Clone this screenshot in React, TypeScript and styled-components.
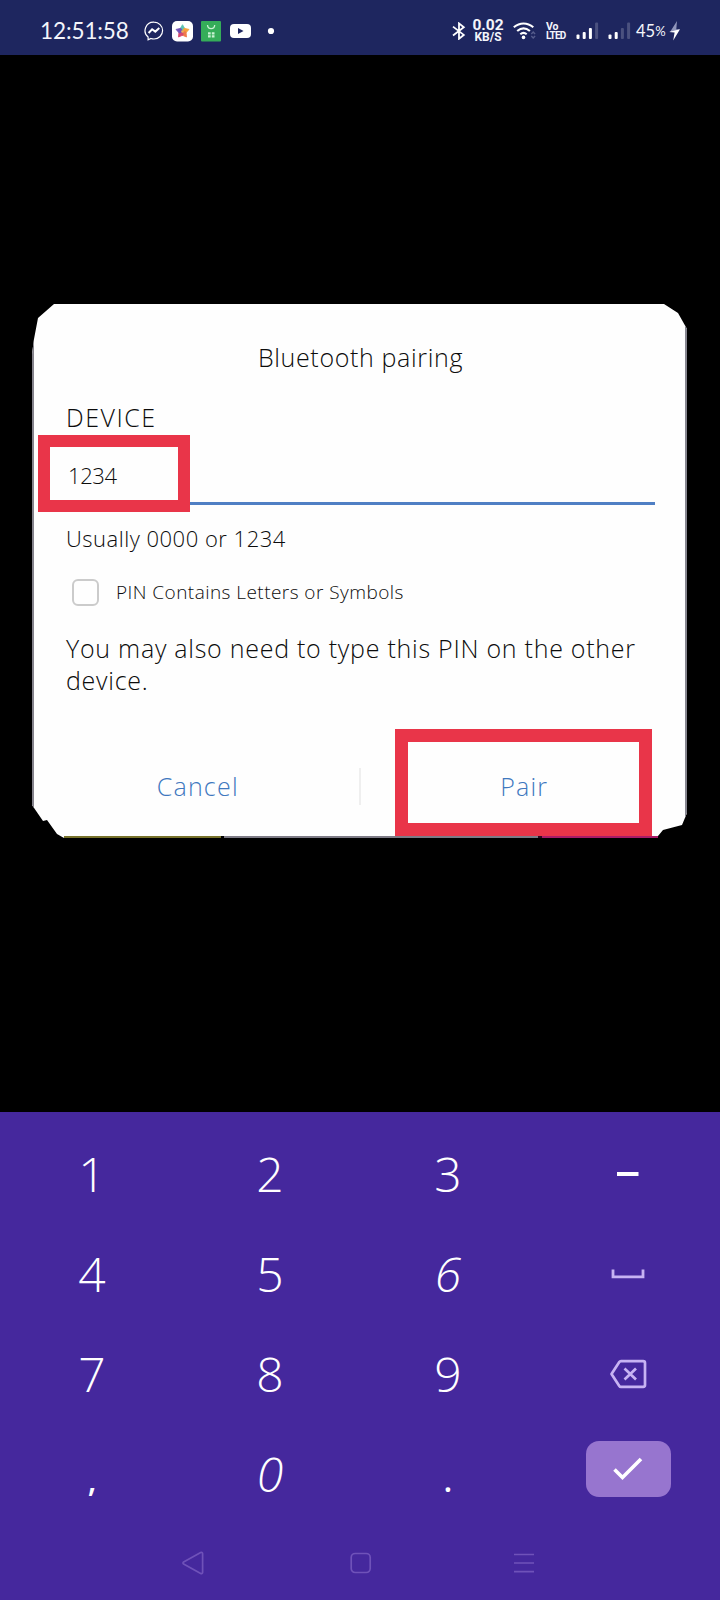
import React from 'react';
import styled, { createGlobalStyle } from 'styled-components';

const GlobalStyle = createGlobalStyle`
  * { box-sizing: border-box; }
  body { margin: 0; background: #000; }
  button { border: 0; padding: 0; background: none; font: inherit; color: inherit; }
`;

const Screen = styled.div`
  width: 720px;
  height: 1600px;
  display: flex;
  flex-direction: column;
  background: #000;
  font-family: 'Open Sans', 'Noto Sans', sans-serif;
  font-weight: 300;
  overflow: hidden;
`;

/* ---------- status bar ---------- */

const StatusBar = styled.header`
  flex: none;
  display: flex;
  justify-content: space-between;
  align-items: center;
  height: 55px;
  padding: 7px 39px 0 40px;
  background: #1e265f;
  color: #f4f5fb;
`;

const StatusGroup = styled.div`
  display: flex;
  align-items: center;
  height: 30px;
`;

const Clock = styled.span`
  width: 104px;
  font: 400 22.5px/30px Lato, sans-serif;
  letter-spacing: -0.1px;
`;

const StatusIcon = styled.svg<{ $gap?: number }>`
  flex: none;
  display: block;
  margin-left: ${(p) => p.$gap ?? 0}px;
`;

const StackedLabel = styled.div<{ $gap: number; $width: number }>`
  display: flex;
  flex-direction: column;
  align-items: center;
  width: ${(p) => p.$width}px;
  margin-left: ${(p) => p.$gap}px;
  font-family: Roboto, sans-serif;
  font-weight: 700;
  white-space: nowrap;
`;

const StackedLine = styled.span<{ $size: number; $height: number; $left?: boolean; $tight?: number }>`
  font-size: ${(p) => p.$size}px;
  line-height: ${(p) => p.$height}px;
  letter-spacing: ${(p) => p.$tight ?? 0}px;
  align-self: ${(p) => (p.$left ? 'flex-start' : 'center')};
`;

const Battery = styled.span`
  width: 30px;
  margin-left: 5px;
  font: 400 16.5px/30px Lato, sans-serif;
  white-space: nowrap;
`;

const Percent = styled.span`
  font-size: 13px;
  vertical-align: 1px;
`;

/* ---------- pairing dialog ---------- */

const Backdrop = styled.main`
  flex: none;
  height: 1057px;
  padding: 249px 0 0 32px;
`;

const Dialog = styled.section`
  position: relative;
  display: flex;
  flex-direction: column;
  width: 655px;
  height: 534px;
  background: #fefefe;
  border-left: 2px solid #85838c;
  border-right: 2px solid #85858f;
  clip-path: polygon(
    22px 0, 632px 0, 646px 9px, 655px 25px, 655px 509px, 650px 521px, 631px 526px, 626px 532px,
    626px 534px, 32px 534px, 25px 530px, 15px 516px, 11px 517px, 0 501px, 0 50px, 2px 35px, 6px 14px
  );
`;

const DialogBody = styled.div`
  display: flex;
  flex-direction: column;
  height: 464px;
  padding: 37px 30px 0 32px;
  color: #0c0c0c;
`;

const DialogTitle = styled.h1`
  margin: 0;
  font-size: 25px;
  font-weight: 300;
  line-height: 32px;
  letter-spacing: 0.65px;
  text-align: center;
`;

const DeviceName = styled.div`
  margin-top: 28px;
  font-size: 25px;
  line-height: 32px;
  letter-spacing: 1.5px;
`;

const PinField = styled.div`
  height: 72px;
  padding: 26px 0 0 2px;
  border-bottom: 3px solid #4f7fc4;
  font-size: 22px;
  line-height: 32px;
  letter-spacing: -0.4px;
`;

const Hint = styled.p`
  margin: 17px 0 0;
  font-size: 22px;
  line-height: 32px;
  letter-spacing: 0.5px;
`;

const CheckRow = styled.label`
  display: flex;
  gap: 17px;
  margin: 25px 0 0 6px;
  font-size: 19px;
  line-height: 26px;
  letter-spacing: 0.45px;
`;

const CheckBox = styled.span`
  width: 27px;
  height: 27px;
  border: 2px solid #cbcbcb;
  border-radius: 6px;
`;

const Message = styled.p`
  margin: 26px 0 0;
  font-size: 25px;
  line-height: 32px;
  letter-spacing: 0.74px;
  white-space: nowrap;
`;

const Actions = styled.div`
  display: flex;
  height: 37px;
`;

const Action = styled.button`
  flex: 1;
  padding-left: 3px;
  color: #3f78be;
  font-size: 25px;
  line-height: 37px;
  letter-spacing: 1.2px;

  & + & {
    border-left: 2px solid #efefef;
  }
`;

const Highlight = styled.div<{ $x: number; $y: number; $w: number; $h: number; $stroke: number }>`
  position: absolute;
  left: ${(p) => p.$x}px;
  top: ${(p) => p.$y}px;
  width: ${(p) => p.$w}px;
  height: ${(p) => p.$h}px;
  border: ${(p) => p.$stroke}px solid #e93549;
`;

const BottomEdge = styled.div`
  display: flex;
  height: 2px;
  margin-top: auto;
  padding-left: 30px;
`;

const EdgePiece = styled.span<{ $w: number; $color: string }>`
  width: ${(p) => p.$w}px;
  background: ${(p) => p.$color};
`;

/* ---------- keyboard ---------- */

const Keyboard = styled.section`
  flex: 1;
  display: flex;
  flex-direction: column;
  background: #45289d;
`;

const Keys = styled.div`
  display: grid;
  grid-template-columns: 178px 178px 178px 182px;
  grid-auto-rows: 100px;
  padding: 12px 1px 0 3px;
`;

const Key = styled.button<{ $slant?: boolean; $heavy?: boolean }>`
  display: flex;
  align-items: center;
  justify-content: center;
  color: #fff;
  font-size: 48px;
  font-weight: ${(p) => (p.$heavy ? 600 : 300)};
  line-height: 100px;
  font-style: ${(p) => (p.$slant ? 'italic' : 'normal')};
`;

const Mark = styled.span`
  font-size: 32px;
  line-height: 100px;
  padding-top: 12px;
`;

const EnterKey = styled.button`
  justify-self: center;
  display: flex;
  align-items: center;
  justify-content: center;
  width: 85px;
  height: 56px;
  margin-top: 17px;
  border-radius: 13px;
  background: #9775cf;
`;

const NavBar = styled.nav`
  display: flex;
  align-items: center;
  justify-content: space-between;
  height: 76px;
  padding: 2px 185px 0 181px;
`;

const Glyph = styled.svg<{ $shift?: number }>`
  display: block;
  flex: none;
  margin-left: ${(p) => p.$shift ?? 0}px;
`;

const Signal = ({ active, gap }: { active: number; gap: number }) => (
  <StatusIcon $gap={gap} width="23" height="18" viewBox="0 0 23 18">
    {[4.5, 7, 11, 16.5].map((h, i) => (
      <rect key={h} x={0.5 + i * 6.2} y={17 - h} width="3" height={h} rx="1" fill="#fff" opacity={i < active ? 1 : 0.2} />
    ))}
  </StatusIcon>
);

const petals = ['#5cc3b0', '#f6a13a', '#f07a4a', '#d7486f', '#7352b8'];

export default function App() {
  return (
    <>
      <GlobalStyle />
      <Screen>
        <StatusBar>
          <StatusGroup>
            <Clock>12:51:58</Clock>
            <StatusIcon width="20" height="20" viewBox="0 0 20 20" fill="none" stroke="#fff">
              <path d="M10 1.2a8.6 8.4 0 0 1 0 16.8c-1.1 0-2.1-.2-3-.5l-2.900 1.300v-2.800A8.500 8.400 0 0 1 10 1.200Z" strokeWidth="1.2" />
              <path d="m4.600 12 3.500-3.700 3.200 2.300 4-3.500" strokeWidth="2" />
            </StatusIcon>
            <StatusIcon $gap={8} width="21" height="21" viewBox="0 0 21 21">
              <rect width="21" height="20.500" rx="5" fill="#fff" />
              {petals.map((color, i) => (
                <path
                  key={color}
                  d="M10.500 10.800 8 8 10.500 3.700 13 8Z"
                  fill={color}
                  stroke={color}
                  strokeWidth="0.800"
                  strokeLinejoin="round"
                  transform={`rotate(${i * 72} 10.500 10.500)`}
                />
              ))}
              <circle cx="10.500" cy="10.500" r="1.300" fill="#f0b45a" />
            </StatusIcon>
            <StatusIcon $gap={8} width="20" height="21" viewBox="0 0 20 21">
              <rect width="20" height="20.500" rx="1" fill="#35ad59" />
              <path d="M6.500 4c.3 4.800 7 4.800 7.200 0" fill="none" stroke="#c9f2d3" strokeWidth="1.300" />
              <path d="M7 11.300h2.700v2.200H7zM10.800 11.300h2.700v2.200h-2.700zM7 14.200h2.700v2.200H7zM10.800 14.200h2.700v2.200h-2.700z" fill="#c9f2d3" />
            </StatusIcon>
            <StatusIcon $gap={9} width="21" height="16" viewBox="0 0 21 16">
              <rect y="1" width="21" height="14" rx="4" fill="#fff" />
              <path d="m8 5 5.500 3L8 11z" fill="#1e265f" />
            </StatusIcon>
            <StatusIcon $gap={16} width="8" height="8" viewBox="0 0 8 8">
              <circle cx="4" cy="4" r="3.100" fill="#fff" />
            </StatusIcon>
          </StatusGroup>

          <StatusGroup>
            <StatusIcon width="14" height="18" viewBox="0 0 14 18" fill="none" stroke="#fff" strokeWidth="1.800">
              <path d="m1 4.600 10.800 8.300L7 16.800V1.400l4.800 3.800L1 13.500" />
            </StatusIcon>
            <StackedLabel $gap={7} $width={30}>
              <StackedLine $size={15.5} $height={11}>0.02</StackedLine>
              <StackedLine $size={12} $height={12}>KB/S</StackedLine>
            </StackedLabel>
            <StatusIcon $gap={10} width="23" height="18" viewBox="0 0 23 18" fill="none">
              <path d="M.8 5.200c6-5 13.500-5 19.500 0M4.200 9c4-3.400 8.700-3.400 12.700 0M7.300 12.300c2-1.700 4.400-1.700 6.400 0" stroke="#fff" strokeWidth="2.100" />
              <circle cx="10.500" cy="15.400" r="1.800" fill="#fff" />
              <path d="m18.300 12 1.900-2 1.900 2M18.300 14l1.900 2 1.900-2" stroke="#555c8c" strokeWidth="1.400" />
            </StatusIcon>
            <StackedLabel $gap={10} $width={21}>
              <StackedLine $size={10.5} $height={9} $left>Vo</StackedLine>
              <StackedLine $size={10} $height={9} $left $tight={-0.8}>LTED</StackedLine>
            </StackedLabel>
            <Signal gap={9} active={3} />
            <Signal gap={9} active={2} />
            <Battery>
              45<Percent>%</Percent>
            </Battery>
            <StatusIcon $gap={3} width="12" height="20" viewBox="0 0 12 20">
              <path d="M8 0 1 11h4.800L11 8.200H7.300z" fill="#9196bb" />
              <path d="M0 11 11 8.200 4.200 19.500 5.600 11.600z" fill="#fff" />
            </StatusIcon>
          </StatusGroup>
        </StatusBar>

        <Backdrop>
          <Dialog>
            <DialogBody>
              <DialogTitle>Bluetooth pairing</DialogTitle>
              <DeviceName>DEVICE</DeviceName>
              <PinField>1234</PinField>
              <Hint>Usually 0000 or 1234</Hint>
              <CheckRow>
                <CheckBox />
                PIN Contains Letters or Symbols
              </CheckRow>
              <Message>
                You may also need to type this PIN on the other
                <br />
                device.
              </Message>
            </DialogBody>
            <Actions>
              <Action>Cancel</Action>
              <Action>Pair</Action>
            </Actions>
            <BottomEdge>
              <EdgePiece $w={157} $color="#77722b" />
              <EdgePiece $w={3} $color="#000" />
              <EdgePiece $w={314} $color="#7d7b86" />
              <EdgePiece $w={4} $color="#2b0a20" />
              <EdgePiece $w={120} $color="#a81b68" />
            </BottomEdge>
            <Highlight $x={4} $y={131} $w={152} $h={77} $stroke={12} />
            <Highlight $x={361} $y={425} $w={257} $h={107} $stroke={13} />
          </Dialog>
        </Backdrop>

        <Keyboard>
          <Keys>
            <Key>1</Key>
            <Key>2</Key>
            <Key>3</Key>
            <Key>
              <Glyph width="22" height="4" viewBox="0 0 22 4">
                <rect width="21.500" height="4" fill="#fff" />
              </Glyph>
            </Key>
            <Key>4</Key>
            <Key>5</Key>
            <Key $slant>6</Key>
            <Key>
              <Glyph width="34" height="10" viewBox="0 0 34 10" fill="none" stroke="#c7b3f3" strokeWidth="2.800">
                <path d="M2 .5v7.300h30V.5" />
              </Glyph>
            </Key>
            <Key>7</Key>
            <Key>8</Key>
            <Key>9</Key>
            <Key>
              <Glyph width="38" height="30" viewBox="0 0 38 30" fill="none" stroke="#c7b3f3" strokeWidth="2.700" strokeLinejoin="round">
                <path d="M12 2.200h22.200a1.800 1.800 0 0 1 1.800 1.800v22a1.800 1.800 0 0 1-1.800 1.800H12a2 2 0 0 1-1.700-.9L2.500 15l7.800-11.900a2 2 0 0 1 1.700-.9Z" />
                <path d="m15.500 9.500 11.500 11m0-11-11.500 11" />
              </Glyph>
            </Key>
            <Key $heavy>
              <Mark>,</Mark>
            </Key>
            <Key $slant>0</Key>
            <Key $heavy>
              <Mark>.</Mark>
            </Key>
            <EnterKey aria-label="Done">
              <Glyph width="32" height="26" viewBox="0 0 32 26" fill="none" stroke="#fff" strokeWidth="3.600">
                <path d="m2.500 13.500 8 8L29 3" />
              </Glyph>
            </EnterKey>
          </Keys>
          <NavBar>
            <Glyph width="24" height="24" viewBox="0 0 24 24" fill="none" stroke="#6f52b9" strokeWidth="1.700" strokeLinejoin="round">
              <path d="M2.600 10.900 19.700 1.500a1.300 1.300 0 0 1 1.900 1.100v18.800a1.300 1.300 0 0 1-1.900 1.100L2.600 13.100a1.300 1.300 0 0 1 0-2.200Z" />
            </Glyph>
            <Glyph $shift={3} width="22" height="22" viewBox="0 0 22 22" fill="none" stroke="#6f52b9" strokeWidth="1.700">
              <rect x="1.200" y="1.500" width="19" height="19" rx="4" />
            </Glyph>
            <Glyph width="22" height="22" viewBox="0 0 22 22" stroke="#6f52b9" strokeWidth="1.700">
              <path d="M1 2.500h20M1 11h20M1 19.700h20" />
            </Glyph>
          </NavBar>
        </Keyboard>
      </Screen>
    </>
  );
}
